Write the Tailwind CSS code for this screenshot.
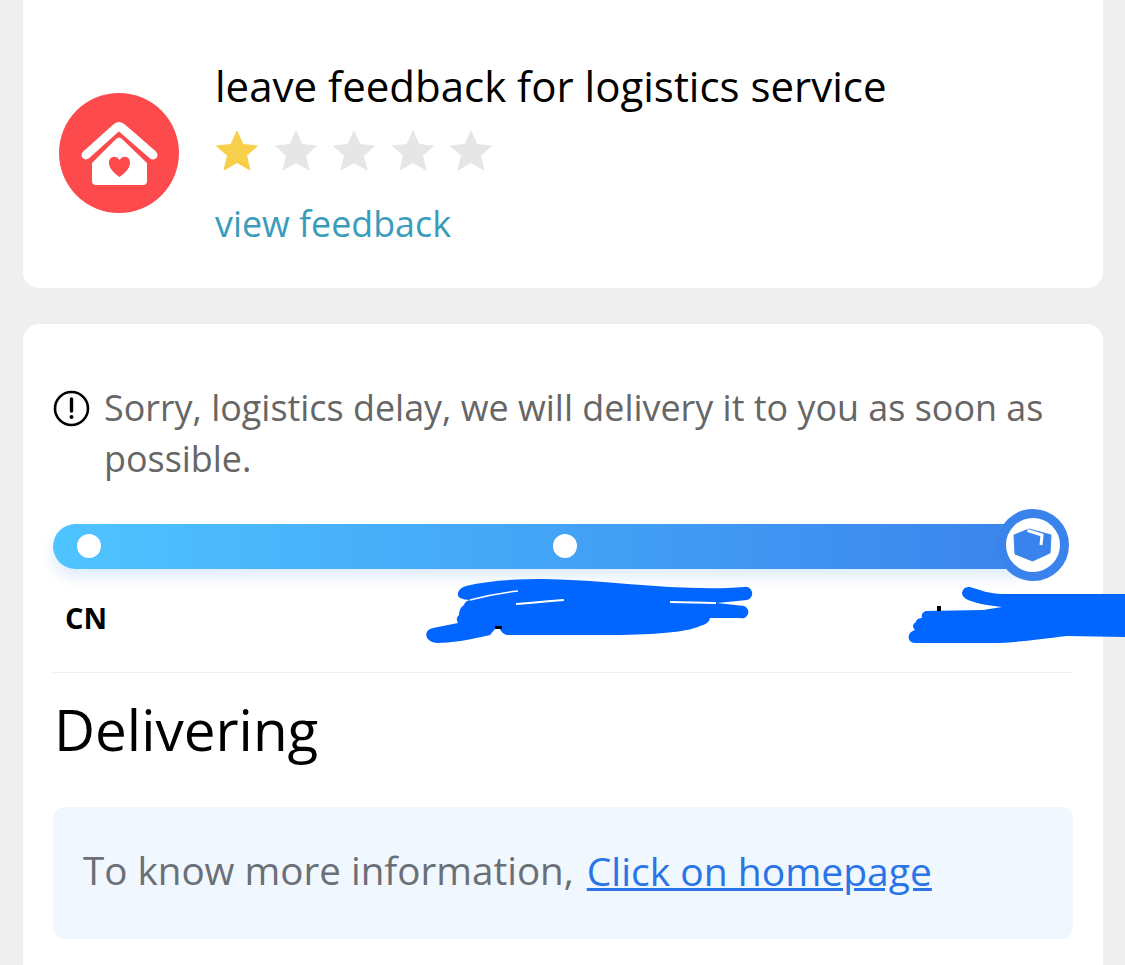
<!DOCTYPE html>
<html lang="en">
<head>
  <meta charset="UTF-8">
  <meta name="viewport" content="width=device-width, initial-scale=1.0">
  <title>Order tracking</title>
  <script src="https://cdn.jsdelivr.net/npm/@tailwindcss/browser@4"></script>
</head>
<body class="bg-[#efefef] font-['Open_Sans',sans-serif]">
  <div class="relative h-[965px] w-[1125px] overflow-hidden">
    <div class="pl-[23px] pr-[22px] -mt-[12px] flex flex-col gap-[36px]">

      <!-- feedback card -->
      <div class="bg-white rounded-[16px] h-[300px] pl-[36px] pt-[73px] flex">
        <div class="w-[120px] h-[120px] mt-[32px] rounded-full bg-[#fc4a4d] shrink-0">
          <svg width="120" height="120" viewBox="0 0 120 120" fill="none">
            <path d="M27 62 L57 35 Q60 32 63 35 L94 62" stroke="#fff" stroke-width="9" stroke-linecap="round" stroke-linejoin="round"/>
            <path d="M33 70 L57 46 Q60 43 63 46 L88 70 V88 Q88 92 84 92 H37 Q33 92 33 88 Z" fill="#fff"/>
            <path d="M60.5 84 C54 79 50 75 50 69.5 C50 63 57.500 61.500 60.500 67 C63.500 61.500 71 63 71 69.500 C71 75 67 79 60.500 84 Z" fill="#fc4a4d"/>
          </svg>
        </div>
        <div class="ml-[37px] -mt-[2px]">
          <h1 class="-ml-[1px] text-[42px] leading-[54px] text-black whitespace-nowrap">leave feedback for logistics service</h1>
          <div class="flex gap-[16.5px] mt-[17px]">
            <svg class="w-[42px] h-[42px]" viewBox="0 0 42 42"><path d="M21 1 L27 14.5 L41.5 16 L30.5 25.5 L34 40 L21 32.5 L8 40 L11.5 25.5 L0.5 16 L15 14.5 Z" fill="#f8cf4a" stroke="#f8cf4a" stroke-linejoin="round"/></svg>
            <svg class="w-[42px] h-[42px]" viewBox="0 0 42 42"><path d="M21 1 L27 14.5 L41.5 16 L30.5 25.5 L34 40 L21 32.5 L8 40 L11.5 25.5 L0.5 16 L15 14.5 Z" fill="#e6e6e6" stroke="#e6e6e6" stroke-linejoin="round"/></svg>
            <svg class="w-[42px] h-[42px]" viewBox="0 0 42 42"><path d="M21 1 L27 14.5 L41.5 16 L30.5 25.5 L34 40 L21 32.5 L8 40 L11.5 25.5 L0.5 16 L15 14.5 Z" fill="#e6e6e6" stroke="#e6e6e6" stroke-linejoin="round"/></svg>
            <svg class="w-[42px] h-[42px]" viewBox="0 0 42 42"><path d="M21 1 L27 14.5 L41.5 16 L30.5 25.5 L34 40 L21 32.5 L8 40 L11.5 25.5 L0.5 16 L15 14.5 Z" fill="#e6e6e6" stroke="#e6e6e6" stroke-linejoin="round"/></svg>
            <svg class="w-[42px] h-[42px]" viewBox="0 0 42 42"><path d="M21 1 L27 14.5 L41.5 16 L30.5 25.5 L34 40 L21 32.5 L8 40 L11.5 25.5 L0.5 16 L15 14.5 Z" fill="#e6e6e6" stroke="#e6e6e6" stroke-linejoin="round"/></svg>
          </div>
          <a class="block -ml-[1px] mt-[28px] text-[35.8px] leading-[46px] text-[#3a9cbb]">view feedback</a>
        </div>
      </div>

      <!-- logistics card -->
      <div class="bg-white rounded-[16px] h-[700px] pl-[30px] pr-[30px] pt-[58px]">
        <div class="flex">
          <svg class="w-[37px] h-[37px] shrink-0 mt-[8px]" viewBox="0 0 37 37" fill="none">
            <circle cx="18.5" cy="18.5" r="16.5" stroke="#000" stroke-width="2.6"/>
            <path d="M18.5 9 V21" stroke="#000" stroke-width="3.4" stroke-linecap="round"/>
            <circle cx="18.5" cy="27" r="2" fill="#000"/>
          </svg>
          <p class="ml-[14px] text-[35.9px] leading-[51px] text-[#666666]">Sorry, logistics delay, we will delivery it to you as soon as possible.</p>
        </div>

        <div class="relative mt-[40px] w-[987px] h-[45px] rounded-full bg-gradient-to-r from-[#4fc4ff] to-[#3b83ec] shadow-[0_8px_14px_rgba(70,150,240,0.18)]">
          <span class="absolute left-[24px] top-[10px] w-[24px] h-[24px] rounded-full bg-white"></span>
          <span class="absolute left-[500px] top-[10px] w-[24px] h-[24px] rounded-full bg-white"></span>
          <span class="absolute left-[944px] -top-[15px] w-[72px] h-[72px] rounded-full bg-white border-[9px] border-[#3b83ec] flex items-center justify-center">
            <svg width="40" height="40" viewBox="0 0 40 40">
              <path d="M1 10 L16 4 L38 10 L37 28 L19.500 36 L2 29 Z" fill="#3b83ec" stroke="#3b83ec" stroke-linejoin="round"/>
              <path d="M14.500 5.500 L29 10 L28 20" stroke="#fff" stroke-width="3" fill="none"/>
            </svg>
          </span>
        </div>

        <div class="mt-[30px] pl-[12px] text-[29px] leading-[38px] font-bold text-black">CN</div>
        <div class="mt-[35px] border-t border-[#f0f0f0]"></div>
        <h2 class="mt-[20px] text-[56.6px] ml-[1px] leading-[74px] text-black">Delivering</h2>
        <div class="mt-[40px] h-[132px] rounded-[12px] bg-[#f0f7fe] pl-[30px] pb-[4px] flex items-center text-[38.6px] text-[#6b6f76]">
          <span>To know more information,</span>
          <a class="ml-[13px] text-[39px] text-[#2a75e6] underline">Click on homepage</a>
        </div>
      </div>
    </div>

    <!-- redaction scribbles -->
    <svg class="absolute inset-0" width="1125" height="965" viewBox="0 0 1125 965" fill="#0066ff">
      <path d="M458 593 Q459 588 466 586 C490 580 520 579 545 579 C610 580 680 592 744 587 A6.500 6.500 0 0 1 747 600 L717 603 L744 606 A6 6 0 0 1 740 618 L710 618 Q709 624 700 626 C690 631 667 634 620 635 L507 635 Q502 634 500 629 L495 629 L490 635 C470 640 450 643 437 643 C424 642 423 630 433 628 L458 623 Q455 618 459 615 Q459 608 464 605 Q465 601 470 600 Q456 599 458 593 Z"/>
      <path d="M470 600 C485 596 500 593 518 591" stroke="#fff" stroke-width="1.500" fill="none"/>
      <path d="M516 604 C530 603 550 601 564 600" stroke="#fff" stroke-width="2" fill="none"/>
      <path d="M670 602 L716 603" stroke="#fff" stroke-width="2" fill="none"/>
      <path d="M962 593 Q963 586 970 587 C980 590 990 594 1002 594 L1125 594 V637 L1067 636 C1040 639 1020 642 1000 643 L915 643 C906 642 907 632 915 630 C911 626 914 623 916 622 C916 619 920 618 922 618 C921 614 923 612 926 611 L983 610 L1002 607 C985 605 975 603 968 600 Q962 597 962 593 Z"/>
      <rect x="495" y="626" width="7" height="3" fill="#000"/>
      <rect x="937" y="606" width="4" height="5" fill="#000"/>
    </svg>
  </div>
</body>
</html>
